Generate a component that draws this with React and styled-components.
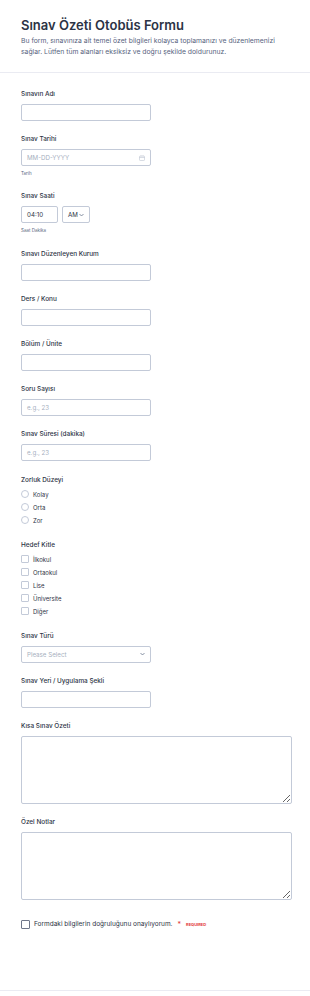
import styled, { createGlobalStyle } from "styled-components";

const Global = createGlobalStyle`
  html, body { margin: 0; padding: 0; background: #fff; }
  body { font-family: Inter, "Noto Sans", sans-serif; color: #2c3345; }
  * { box-sizing: border-box; }
`;

const Page = styled.div`
  width: 310px;
  min-height: 996px;
  background: #fff;
`;

const Header = styled.header`
  padding: 15px 21px 0;
  height: 73px;
  border-bottom: 1px solid #eaebf2;
`;

const Title = styled.h1`
  margin: 0;
  font-size: 13px;
  line-height: 20px;
  font-weight: 600;
  color: #2c3345;
`;

const Desc = styled.p`
  margin: 0;
  max-width: 255px;
  font-size: 6.8px;
  line-height: 11px;
  color: #57647e;
`;

const Form = styled.form`
  padding: 16px 21px 0;
  height: 918px;
  border-bottom: 1px solid #eaebf2;
  display: flex;
  flex-direction: column;
  gap: 13.2px;
`;

const Field = styled.div`
  display: flex;
  flex-direction: column;
`;

const Label = styled.div`
  font-size: 6.4px;
  line-height: 10px;
  font-weight: 500;
  color: #2c3345;
  margin-bottom: ${(p) => (p.$tight ? 3 : 5)}px;
`;

const Input = styled.div`
  width: ${(p) => p.$w || 130}px;
  height: 17px;
  border: 1px solid #c3cad8;
  border-radius: 2px;
  display: flex;
  align-items: center;
  justify-content: space-between;
  padding: 0 5px;
  font-size: 6.2px;
  color: ${(p) => (p.$ph ? "#a7b0c0" : "#2c3345")};
`;

const Area = styled.textarea`
  width: 271px;
  height: 68px;
  border: 1px solid #c3cad8;
  border-radius: 2px;
  margin: 0;
  padding: 4px;
  display: block;
`;

const Sub = styled.div`
  font-size: 4.5px;
  line-height: 8px;
  color: #57647e;
  margin-top: 4px;
`;

const Row = styled.div`
  display: flex;
  gap: 4px;
`;

const Option = styled.div`
  display: flex;
  align-items: center;
  height: 13px;
  gap: 4px;
  font-size: 6px;
  color: #2c3345;
`;

const Radio = styled.span`
  width: 8px;
  height: 8px;
  border: 1px solid #c3cad8;
  border-radius: 50%;
`;

const Box = styled.span`
  width: ${(p) => p.$s || 8}px;
  height: ${(p) => p.$s || 8}px;
  border: 1px solid ${(p) => (p.$dark ? "#70778a" : "#c3cad8")};
  border-radius: 1px;
`;

const Confirm = styled.div`
  display: flex;
  align-items: center;
  gap: 4px;
  margin-top: 6px;
  font-size: 6.5px;
  color: #2c3345;
`;

const Star = styled.span`
  color: #e23b3b;
  font-size: 7px;
  margin-left: 1px;
  align-self: flex-start;
`;

const Req = styled.span`
  color: #e23b3b;
  font-size: 4px;
  font-weight: 700;
  margin-left: 1px;
`;

const Chevron = () => (
  <svg width="5" height="4" viewBox="0 0 10 6" fill="none">
    <path d="M1 1l4 4 4-4" stroke="#57647e" strokeWidth="1.4" />
  </svg>
);

const Calendar = () => (
  <svg width="6" height="6" viewBox="0 0 12 12" fill="none">
    <rect x="1" y="2" width="10" height="9" rx="1.5" stroke="#b1b8c8" strokeWidth="1" />
    <path d="M1 5h10M4 1v2M8 1v2" stroke="#b1b8c8" strokeWidth="1" />
  </svg>
);

const TextField = ({ label, ph }) => (
  <Field>
    <Label>{label}</Label>
    <Input $ph={!!ph}>{ph}</Input>
  </Field>
);

export default function App() {
  return (
    <Page>
      <Global />
      <Header>
        <Title>Sınav Özeti Otobüs Formu</Title>
        <Desc>
          Bu form, sınavınıza ait temel özet bilgileri kolayca toplamanızı ve düzenlemenizi
          sağlar. Lütfen tüm alanları eksiksiz ve doğru şekilde doldurunuz.
        </Desc>
      </Header>
      <Form>
        <TextField label="Sınavın Adı" />
        <Field>
          <Label>Sınav Tarihi</Label>
          <Input $ph>
            MM-DD-YYYY
            <Calendar />
          </Input>
          <Sub>Tarih</Sub>
        </Field>
        <Field>
          <Label>Sınav Saati</Label>
          <Row>
            <Input $w={37}>04:10</Input>
            <Input $w={28}>
              AM
              <Chevron />
            </Input>
          </Row>
          <Sub>Saat Dakika</Sub>
        </Field>
        <TextField label="Sınavı Düzenleyen Kurum" />
        <TextField label="Ders / Konu" />
        <TextField label="Bölüm / Ünite" />
        <TextField label="Soru Sayısı" ph="e.g., 23" />
        <TextField label="Sınav Süresi (dakika)" ph="e.g., 23" />
        <Field>
          <Label $tight>Zorluk Düzeyi</Label>
          {["Kolay", "Orta", "Zor"].map((o) => (
            <Option key={o}>
              <Radio />
              {o}
            </Option>
          ))}
        </Field>
        <Field>
          <Label $tight>Hedef Kitle</Label>
          {["İlkokul", "Ortaokul", "Lise", "Üniversite", "Diğer"].map((o) => (
            <Option key={o}>
              <Box />
              {o}
            </Option>
          ))}
        </Field>
        <Field>
          <Label>Sınav Türü</Label>
          <Input $ph>
            Please Select
            <Chevron />
          </Input>
        </Field>
        <TextField label="Sınav Yeri / Uygulama Şekli" />
        <Field>
          <Label>Kısa Sınav Özeti</Label>
          <Area />
        </Field>
        <Field>
          <Label>Özel Notlar</Label>
          <Area />
        </Field>
        <Confirm>
          <Box $s={9} $dark />
          Formdaki bilgilerin doğruluğunu onaylıyorum.
          <Star>*</Star>
          <Req>REQUIRED</Req>
        </Confirm>
      </Form>
    </Page>
  );
}
